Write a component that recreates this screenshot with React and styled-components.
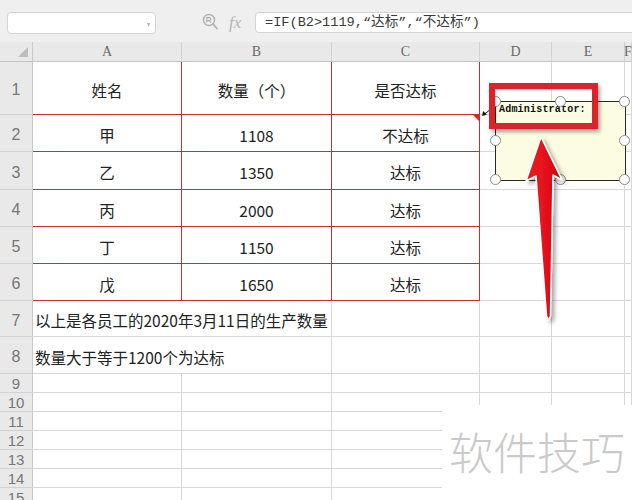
import React from "react";
import styled, { createGlobalStyle } from "styled-components";

const GlobalStyle = createGlobalStyle`
  html, body {
    margin: 0;
    padding: 0;
    background: #ffffff;
    overflow: hidden;
  }
  body {
    font-family: "Noto Sans CJK SC", "Noto Sans", sans-serif;
  }
`;

const RED = "#c62f36";
const GRID = "#d8d8d8";

const colWidths = [33, 149, 150, 148, 72, 73, 7];
const colNames = ["A", "B", "C", "D", "E", "F"];
const rowHeights = [53, 37, 38, 37, 37, 37, 36, 37, 19, 19, 19, 19, 19, 19, 19];

const table = [
  ["姓名", "数量（个）", "是否达标"],
  ["甲", "1108", "不达标"],
  ["乙", "1350", "达标"],
  ["丙", "2000", "达标"],
  ["丁", "1150", "达标"],
  ["戊", "1650", "达标"],
];

const notes = ["以上是各员工的2020年3月11日的生产数量", "数量大于等于1200个为达标"];

export default function App() {
  return (
    <>
      <GlobalStyle />
      <Page>
        <Toolbar>
          <NameBox>
            <Caret>▾</Caret>
          </NameBox>
          <ToolIcons>
            <svg width="16" height="18" viewBox="0 0 16 18">
              <circle cx="7" cy="7" r="5.5" fill="none" stroke="#b0b0b0" strokeWidth="1.4" />
              <path d="M4.8 9.5V4.6h2.4a1.5 1.5 0 0 1 0 3H4.8M7 7.6l2 2" fill="none" stroke="#b0b0b0" strokeWidth="1.1" />
              <path d="M11 11l4 4.5" stroke="#b0b0b0" strokeWidth="1.8" strokeLinecap="round" />
            </svg>
            <Fx>fx</Fx>
          </ToolIcons>
          <FormulaBox>=IF(B2&gt;1119,“达标”,“不达标”)</FormulaBox>
        </Toolbar>

        <Sheet>
          <Corner>
            <CornerMark />
          </Corner>
          {colNames.map((c) => (
            <ColHead key={c}>{c}</ColHead>
          ))}

          {rowHeights.map((h, r) => {
            const row = r + 1;
            const cells = [];
            cells.push(
              <RowHead key={`h${row}`} $small={h < 30}>
                {row}
              </RowHead>
            );
            if (row <= 6) {
              table[r].forEach((t, i) => (
                cells.push(
                  <Cell key={`c${row}-${i}`} $red>
                    {t}
                  </Cell>
                )
              ));
              cells.push(<Cell key={`d${row}`} />, <Cell key={`e${row}`} />, <Cell key={`f${row}`} />);
            } else if (row <= 8) {
              cells.push(
                <NoteCell key={`n${row}`}>{notes[row - 7]}</NoteCell>,
                <Cell key={`c${row}`} />,
                <Cell key={`d${row}`} />,
                <Cell key={`e${row}`} />,
                <Cell key={`f${row}`} />
              );
            } else {
              colNames.forEach((c) => cells.push(<Cell key={`${c}${row}`} />));
            }
            return cells;
          })}
        </Sheet>

        <CommentMark />
        <svg
          width="632"
          height="500"
          style={{ position: "absolute", left: 0, top: 0, pointerEvents: "none" }}
        >
          <line x1="496" y1="105" x2="484" y2="114.5" stroke="#111" strokeWidth="1" />
          <path d="M482 116l1.2-5 3.6 3.8z" fill="#111" />
        </svg>

        <CommentBox>
          <CommentText>Administrator:</CommentText>
          {[
            [0, 0], [50, 0], [100, 0],
            [0, 50], [100, 50],
            [0, 100], [50, 100], [100, 100],
          ].map(([x, y]) => (
            <Handle key={`${x}-${y}`} $x={x} $y={y} />
          ))}
        </CommentBox>
        <Highlight />

        <ArrowSvg width="632" height="500" viewBox="0 0 632 500">
          <defs>
            <linearGradient id="arrowRed" x1="0" y1="0" x2="1" y2="0">
              <stop offset="0" stopColor="#f01820" />
              <stop offset="0.6" stopColor="#e3101a" />
              <stop offset="1" stopColor="#b8070e" />
            </linearGradient>
            <filter id="arrowShadow" x="-50%" y="-20%" width="200%" height="140%">
              <feDropShadow dx="3" dy="3" stdDeviation="2" floodColor="#000" floodOpacity="0.35" />
            </filter>
          </defs>
          <path
            d="M541 137 L562 180 L553 175 L550.5 316 L548.5 320 L546.5 316 L536 176 L526 181 Z"
            fill="url(#arrowRed)"
            stroke="#fff"
            strokeWidth="1.5"
            strokeLinejoin="round"
            filter="url(#arrowShadow)"
          />
        </ArrowSvg>

        <Watermark>软件技巧</Watermark>
      </Page>
    </>
  );
}

const Page = styled.div`
  position: relative;
  width: 632px;
  height: 500px;
  overflow: hidden;
  background: #ffffff;
`;

const Toolbar = styled.div`
  height: 42px;
  box-sizing: border-box;
  display: flex;
  align-items: flex-start;
  padding: 12px 0 0 7px;
  background: #efefef;
`;

const NameBox = styled.div`
  width: 149px;
  height: 22px;
  box-sizing: border-box;
  background: #ffffff;
  border: 1px solid #d4d4d4;
  border-radius: 4px;
  display: flex;
  align-items: center;
  justify-content: flex-end;
  padding-right: 4px;
`;

const Caret = styled.span`
  font-size: 8px;
  color: #b8b8b8;
  transform: scaleX(0.8);
`;

const ToolIcons = styled.div`
  display: flex;
  align-items: center;
  gap: 11px;
  height: 20px;
  margin-left: 46px;
  width: 53px;
`;

const Fx = styled.span`
  font-family: "Liberation Serif", "DejaVu Serif", serif;
  font-style: italic;
  font-size: 17px;
  color: #b4b4b4;
  line-height: 1;
`;

const FormulaBox = styled.div`
  flex: 1;
  height: 21px;
  box-sizing: border-box;
  margin-right: -6px;
  background: #ffffff;
  border: 1px solid #d4d4d4;
  border-radius: 4px;
  padding-left: 9px;
  font-family: "Liberation Mono", "Noto Sans CJK SC", monospace;
  font-size: 13.6px;
  line-height: 19px;
  color: #3a3a3a;
  white-space: nowrap;
  overflow: hidden;
`;

const Sheet = styled.div`
  display: grid;
  grid-template-columns: ${colWidths.map((w) => `${w}px`).join(" ")};
  grid-template-rows: 20px ${rowHeights.map((h) => `${h}px`).join(" ")};
`;

const Corner = styled.div`
  position: relative;
  background: #e9e9e9;
  border-right: 1px solid #c9c9c9;
  border-bottom: 1px solid #c4c4c4;
  box-sizing: border-box;
`;

const CornerMark = styled.div`
  position: absolute;
  right: 4px;
  bottom: 4px;
  width: 0;
  height: 0;
  border-left: 10px solid transparent;
  border-bottom: 10px solid #bdbdbd;
`;

const ColHead = styled.div`
  background: #e9e9e9;
  border-right: 1px solid #d2d2d2;
  border-bottom: 1px solid #c4c4c4;
  box-sizing: border-box;
  display: flex;
  align-items: center;
  justify-content: center;
  font-family: "Liberation Serif", "DejaVu Serif", serif;
  font-size: 14px;
  color: #6a6a6a;
`;

const RowHead = styled.div`
  background: #e9e9e9;
  border-right: 1px solid #c9c9c9;
  border-bottom: 1px solid #d2d2d2;
  box-sizing: border-box;
  display: flex;
  align-items: center;
  justify-content: center;
  font-family: "Liberation Sans", "Noto Sans", sans-serif;
  font-size: ${(p) => (p.$small ? "15px" : "16px")};
  color: #777777;
  padding-top: ${(p) => (p.$small ? "1px" : "4px")};
`;

const Cell = styled.div`
  box-sizing: border-box;
  border-right: 1px solid ${(p) => (p.$red ? RED : GRID)};
  border-bottom: 1px solid ${(p) => (p.$red ? RED : GRID)};
  display: flex;
  align-items: center;
  justify-content: center;
  font-size: 15.5px;
  color: #222222;
  padding-top: 3px;
  white-space: nowrap;
`;

const NoteCell = styled(Cell)`
  grid-column: span 2;
  justify-content: flex-start;
  padding-left: 2px;
  font-size: 15.5px;
`;

const CommentMark = styled.div`
  position: absolute;
  left: 473px;
  top: 115px;
  width: 0;
  height: 0;
  border-top: 7px solid ${RED};
  border-left: 7px solid transparent;
`;

const CommentBox = styled.div`
  position: absolute;
  left: 495px;
  top: 101px;
  width: 131px;
  height: 80px;
  box-sizing: border-box;
  background: #fcfce2;
  border: 1px solid #2a2a2a;
`;

const CommentText = styled.div`
  padding: 2px 0 0 3px;
  font-family: "Liberation Mono", "DejaVu Sans Mono", monospace;
  font-weight: bold;
  font-size: 10px;
  letter-spacing: 0.2px;
  color: #111111;
`;

const Handle = styled.div`
  position: absolute;
  left: calc(${(p) => p.$x}% - 6px);
  top: calc(${(p) => p.$y}% - 6px);
  width: 11px;
  height: 11px;
  box-sizing: border-box;
  border-radius: 50%;
  background: #ffffff;
  border: 1px solid #8a8a8a;
`;

const Highlight = styled.div`
  position: absolute;
  left: 489px;
  top: 83px;
  width: 109px;
  height: 46px;
  box-sizing: border-box;
  border: 6px solid #d8242a;
  box-shadow: 2px 3px 4px rgba(0, 0, 0, 0.35), inset 1px 1px 2px rgba(0, 0, 0, 0.25);
`;

const ArrowSvg = styled.svg`
  position: absolute;
  left: 0;
  top: 0;
  pointer-events: none;
`;

const Watermark = styled.div`
  position: absolute;
  left: 442px;
  top: 405px;
  width: 190px;
  height: 95px;
  background: #ffffff;
  display: flex;
  align-items: center;
  justify-content: center;
  box-sizing: border-box;
  font-size: 44px;
  font-weight: 300;
  color: #cacaca;
  padding-bottom: 4px;
`;
